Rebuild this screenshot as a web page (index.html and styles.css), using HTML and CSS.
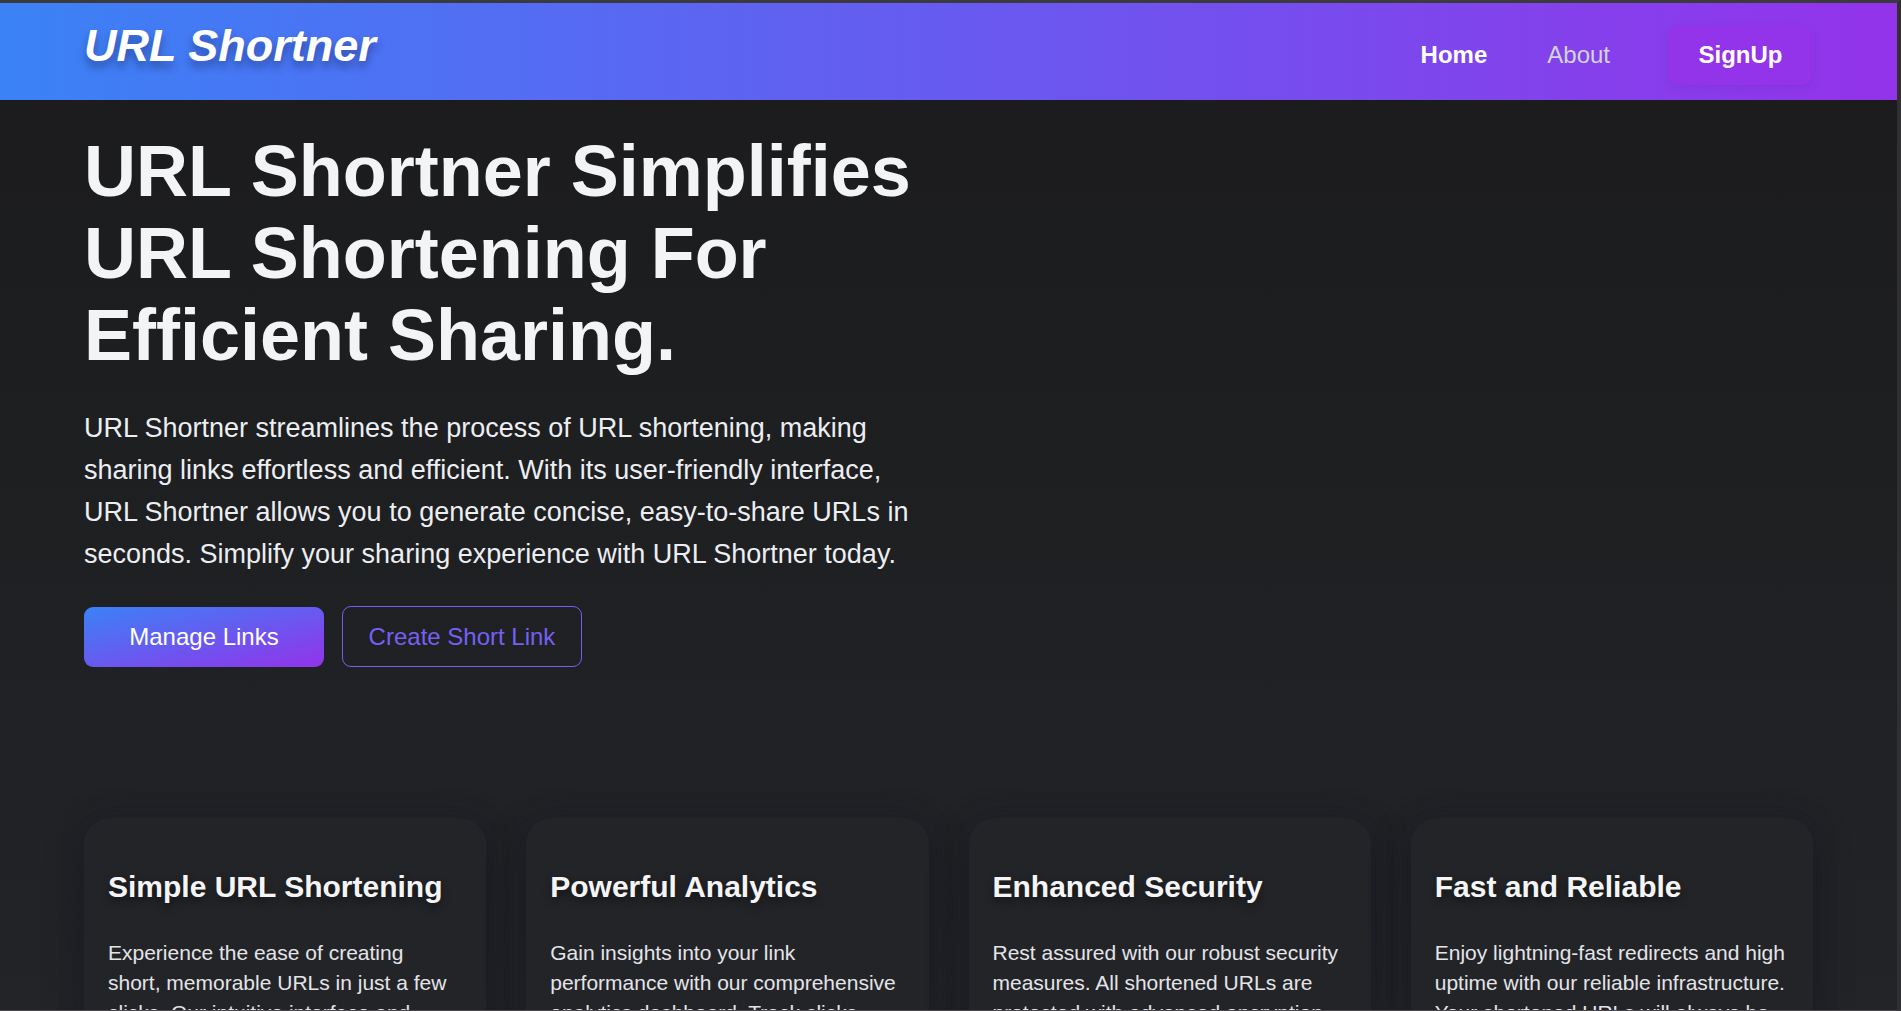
FILE: index.html
```html
<!DOCTYPE html>
<html lang="en">
<head>
<meta charset="utf-8">
<title>URL Shortner</title>
<link rel="stylesheet" href="styles.css">
</head>
<body>
<div class="frame">
  <header class="topbar">
    <div class="container topbar-inner">
      <a class="logo" href="#">URL Shortner</a>
      <nav class="nav">
        <a class="nav-link active" href="#">Home</a>
        <a class="nav-link" href="#">About</a>
        <a class="nav-signup" href="#">SignUp</a>
      </nav>
    </div>
  </header>
  <main class="container">
    <section class="hero">
      <h1 class="hero-title">URL Shortner Simplifies URL Shortening For Efficient Sharing.</h1>
      <p class="hero-text">URL Shortner streamlines the process of URL shortening, making sharing links effortless and efficient. With its user-friendly interface, URL Shortner allows you to generate concise, easy-to-share URLs in seconds. Simplify your sharing experience with URL Shortner today.</p>
      <div class="hero-actions">
        <a class="btn btn-primary" href="#">Manage Links</a>
        <a class="btn btn-outline" href="#">Create Short Link</a>
      </div>
    </section>
    <section class="features">
      <div class="card">
        <h2 class="card-title">Simple URL Shortening</h2>
        <p class="card-text">Experience the ease of creating short, memorable URLs in just a few clicks. Our intuitive interface and quick setup process make it simple to shorten any link.</p>
      </div>
      <div class="card">
        <h2 class="card-title">Powerful Analytics</h2>
        <p class="card-text">Gain insights into your link performance with our comprehensive analytics dashboard. Track clicks, geographic data, and referral sources.</p>
      </div>
      <div class="card">
        <h2 class="card-title">Enhanced Security</h2>
        <p class="card-text">Rest assured with our robust security measures. All shortened URLs are protected with advanced encryption to keep your data safe.</p>
      </div>
      <div class="card">
        <h2 class="card-title">Fast and Reliable</h2>
        <p class="card-text">Enjoy lightning-fast redirects and high uptime with our reliable infrastructure. Your shortened URLs will always be available when you need them.</p>
      </div>
    </section>
  </main>
</div>
</body>
</html>
```
FILE: styles.css
```css
* {
  box-sizing: border-box;
}

html, body {
  margin: 0;
  padding: 0;
  height: 100%;
  overflow: hidden;
}

body {
  font-family: "Liberation Sans", Arial, sans-serif;
  background: #1e1f22;
  color: #f3f4f6;
}

a {
  text-decoration: none;
  color: inherit;
}

.frame {
  height: 100vh;
  overflow: hidden;
  border-top: 3px solid #3b3b3f;
  border-right: 4px solid #303033;
  border-bottom: 1px solid #46464b;
  background: linear-gradient(to bottom, #1b1b1d 0%, #1e1f21 45%, #232428 100%);
}

.container {
  width: 1729px;
  margin: 0 auto;
}

/* Header */
.topbar {
  height: 97px;
  background: linear-gradient(to right, #3b82f6, #9333ea);
}

.topbar-inner {
  display: flex;
  justify-content: space-between;
  align-items: flex-start;
}

.logo {
  margin-top: 16px;
  font-size: 45px;
  line-height: 54px;
  font-weight: 700;
  font-style: italic;
  color: #ffffff;
  text-shadow: 0 6px 9px rgba(20, 30, 80, 0.45);
}

.nav {
  margin-top: 22px;
  display: flex;
  align-items: center;
}

.nav-link {
  padding: 0 30px;
  height: 60px;
  line-height: 60px;
  font-size: 24px;
  color: #d1d5db;
}

.nav-link.active {
  color: #ffffff;
  font-weight: 700;
}

.nav-signup {
  margin-left: 28px;
  width: 145px;
  height: 60px;
  line-height: 60px;
  text-align: center;
  font-size: 24px;
  font-weight: 700;
  color: #ffffff;
  background: #9333ea;
  border-radius: 12px;
  box-shadow: 0 4px 10px rgba(60, 0, 120, 0.08);
}

/* Hero */
.hero {
  padding-top: 30px;
  width: 840px;
}

.hero-title {
  margin: 0;
  font-size: 72px;
  line-height: 82px;
  font-weight: 700;
  color: #f3f4f6;
}

.hero-text {
  margin: 31px 0 0;
  font-size: 27px;
  line-height: 42px;
  color: #eceef1;
}

.hero-actions {
  margin-top: 31px;
  display: flex;
  gap: 18px;
  align-items: center;
}

.btn {
  display: flex;
  align-items: center;
  justify-content: center;
  width: 240px;
  height: 61px;
  font-size: 24px;
  border-radius: 9px;
}

.btn-primary {
  background: linear-gradient(to bottom right, #3b82f6, #9333ea);
  color: #ffffff;
  height: 60px;
}

.btn-outline {
  border: 1.5px solid #7b5cf3;
  color: #7560f2;
  background: transparent;
}

/* Features */
.features {
  margin-top: 151px;
  display: grid;
  grid-template-columns: repeat(4, 1fr);
  gap: 40px;
}

.card {
  background: #232427;
  border-radius: 26px;
  padding: 48px 26.5px 40px 24px;
  min-height: 320px;
  box-shadow: 0 10px 40px rgba(0, 0, 0, 0.28), 0 0 24px rgba(40, 40, 70, 0.25);
}

.card-title {
  margin: 0;
  font-size: 30px;
  line-height: 42px;
  font-weight: 700;
  color: #f5f5f7;
  text-shadow: 0 4px 8px rgba(0, 0, 0, 0.45);
}

.card-text {
  margin: 30px 0 0;
  font-size: 21px;
  line-height: 30px;
  color: #e3e4e7;
}
```
